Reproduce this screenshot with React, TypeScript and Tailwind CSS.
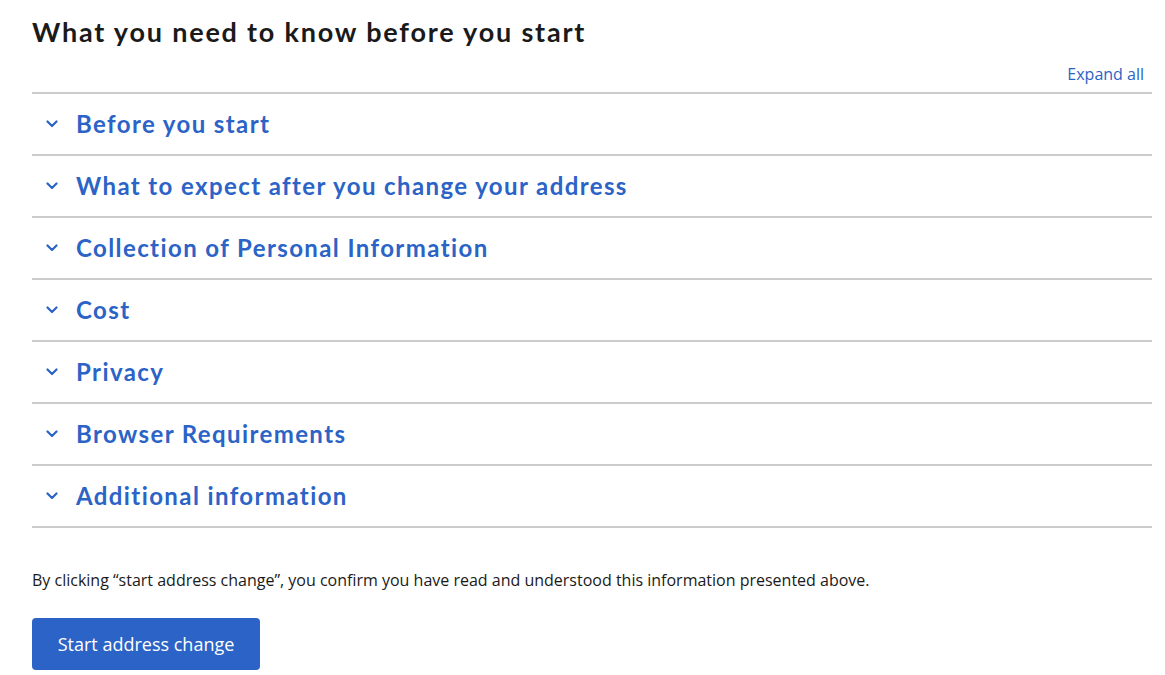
const items = [
  "Before you start",
  "What to expect after you change your address",
  "Collection of Personal Information",
  "Cost",
  "Privacy",
  "Browser Requirements",
  "Additional information",
];

function Chevron() {
  return (
    <svg width="12" height="8" viewBox="0 0 12 8" fill="none" className="shrink-0">
      <path d="M1.5 1.5 6 6l4.5-4.5" stroke="#2b63c6" strokeWidth="2.2" strokeLinecap="round" strokeLinejoin="round" />
    </svg>
  );
}

export default function App() {
  return (
    <div className="min-h-screen bg-white pl-8 pr-[13px] pt-[14px] font-['Open_Sans',sans-serif]">
      <h2 className="font-['Lato',sans-serif] text-[27px] font-bold leading-[36px] tracking-[1.8px] text-[#1a1a1a]">
        What you need to know before you start
      </h2>

      <div className="mt-[12px] flex justify-end pr-[8px]">
        <button className="text-[16px] leading-[24px] text-[#2b63c6]">Expand all</button>
      </div>

      <div className="mt-[6px] border-b-2 border-[#cccccc]">
        {items.map((label) => (
          <div key={label} className="flex h-[62px] items-center gap-[18px] border-t-2 border-[#cccccc] pl-[14px]">
            <Chevron />
            <span className="font-['Lato',sans-serif] text-[24px] font-bold tracking-[1.4px] text-[#2b63c6]">
              {label}
            </span>
          </div>
        ))}
      </div>

      <p className="mt-[40px] text-[16px] leading-[24px] text-[#1a1a1a]">
        By clicking “start address change”, you confirm you have read and understood this information presented above.
      </p>

      <button className="mt-[26px] h-[52px] w-[228px] rounded-[4px] bg-[#2b63c6] text-[18px] text-white">
        Start address change
      </button>
    </div>
  );
}
